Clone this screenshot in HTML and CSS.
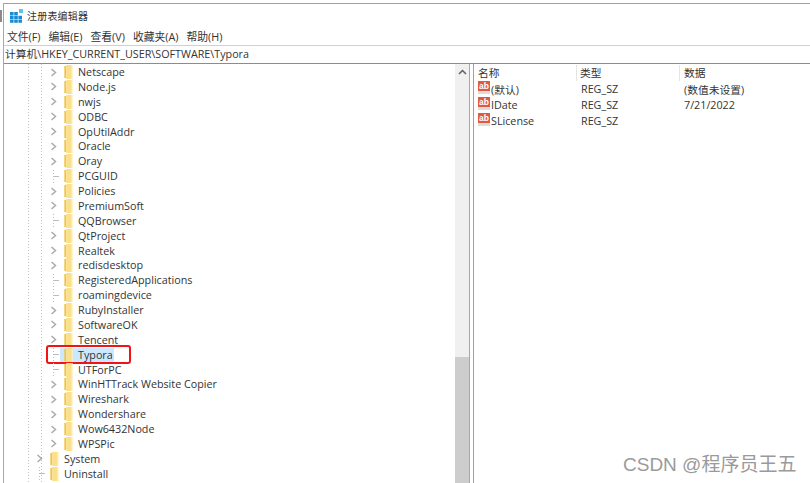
FILE: index.html
```html
<!DOCTYPE html>
<html lang="en">
<head>
    <meta charset="UTF-8">
    <title>注册表编辑器</title>
    <link rel="stylesheet" href="styles.css">
</head>
<body>
    <svg class="defs" width="0" height="0">
        <symbol id="chev" viewBox="0 0 7 9"><path d="M1.5 1 L5.5 4.5 L1.5 8" fill="none" stroke="#ababab" stroke-width="1.5"/></symbol>
        <symbol id="folder" viewBox="0 0 11 15"><path d="M1 1h2v13H1z" fill="#f0c44e"/><path d="M3 0h6v15H3z" fill="#fbe08c"/><path d="M9 0h1v15H9z" fill="#fff0c0"/></symbol>
    </svg>
    <div class="remnant"></div>
    <div class="window">
        <div class="titlebar">
            <svg class="app-icon" width="14" height="15" viewBox="0 0 14 15">
                <path d="M0 4h3.6v3.2H0zM4.2 4h3.6v3.2H4.2zM0 7.8h3.6V11H0zM4.2 7.8h3.6V11H4.2zM8.4 7.8H12V11H8.4zM0 11.6h3.6v3.2H0zM4.2 11.6h3.6v3.2H4.2zM8.4 11.6H12v3.2H8.4z" fill="#1a8ad4"/>
                <path d="M9 1h4v4H9z" fill="#5cc4ea"/>
            </svg>
            <span>注册表编辑器</span>
        </div>
        <div class="menubar">
            <span>文件(F)</span>
            <span>编辑(E)</span>
            <span>查看(V)</span>
            <span>收藏夹(A)</span>
            <span>帮助(H)</span>
        </div>
        <div class="address">计算机\HKEY_CURRENT_USER\SOFTWARE\Typora</div>
        <div class="panes">
            <div class="tree">
                <div class="row"><svg class="chev"><use href="#chev"/></svg><svg class="folder"><use href="#folder"/></svg><span class="label">Netscape</span></div>
                <div class="row"><svg class="chev"><use href="#chev"/></svg><svg class="folder"><use href="#folder"/></svg><span class="label">Node.js</span></div>
                <div class="row"><svg class="chev"><use href="#chev"/></svg><svg class="folder"><use href="#folder"/></svg><span class="label">nwjs</span></div>
                <div class="row"><svg class="chev"><use href="#chev"/></svg><svg class="folder"><use href="#folder"/></svg><span class="label">ODBC</span></div>
                <div class="row"><svg class="chev"><use href="#chev"/></svg><svg class="folder"><use href="#folder"/></svg><span class="label">OpUtilAddr</span></div>
                <div class="row"><svg class="chev"><use href="#chev"/></svg><svg class="folder"><use href="#folder"/></svg><span class="label">Oracle</span></div>
                <div class="row"><svg class="chev"><use href="#chev"/></svg><svg class="folder"><use href="#folder"/></svg><span class="label">Oray</span></div>
                <div class="row leaf"><i class="dash"></i><svg class="folder"><use href="#folder"/></svg><span class="label">PCGUID</span></div>
                <div class="row"><svg class="chev"><use href="#chev"/></svg><svg class="folder"><use href="#folder"/></svg><span class="label">Policies</span></div>
                <div class="row"><svg class="chev"><use href="#chev"/></svg><svg class="folder"><use href="#folder"/></svg><span class="label">PremiumSoft</span></div>
                <div class="row leaf"><i class="dash"></i><svg class="folder"><use href="#folder"/></svg><span class="label">QQBrowser</span></div>
                <div class="row"><svg class="chev"><use href="#chev"/></svg><svg class="folder"><use href="#folder"/></svg><span class="label">QtProject</span></div>
                <div class="row"><svg class="chev"><use href="#chev"/></svg><svg class="folder"><use href="#folder"/></svg><span class="label">Realtek</span></div>
                <div class="row"><svg class="chev"><use href="#chev"/></svg><svg class="folder"><use href="#folder"/></svg><span class="label">redisdesktop</span></div>
                <div class="row leaf"><i class="dash"></i><svg class="folder"><use href="#folder"/></svg><span class="label">RegisteredApplications</span></div>
                <div class="row leaf"><i class="dash"></i><svg class="folder"><use href="#folder"/></svg><span class="label">roamingdevice</span></div>
                <div class="row"><svg class="chev"><use href="#chev"/></svg><svg class="folder"><use href="#folder"/></svg><span class="label">RubyInstaller</span></div>
                <div class="row"><svg class="chev"><use href="#chev"/></svg><svg class="folder"><use href="#folder"/></svg><span class="label">SoftwareOK</span></div>
                <div class="row"><svg class="chev"><use href="#chev"/></svg><svg class="folder"><use href="#folder"/></svg><span class="label">Tencent</span></div>
                <div class="row leaf selected"><i class="dash"></i><svg class="folder"><use href="#folder"/></svg><span class="label">Typora</span><i class="mark"></i></div>
                <div class="row leaf"><i class="dash"></i><svg class="folder"><use href="#folder"/></svg><span class="label">UTForPC</span></div>
                <div class="row"><svg class="chev"><use href="#chev"/></svg><svg class="folder"><use href="#folder"/></svg><span class="label">WinHTTrack Website Copier</span></div>
                <div class="row"><svg class="chev"><use href="#chev"/></svg><svg class="folder"><use href="#folder"/></svg><span class="label">Wireshark</span></div>
                <div class="row"><svg class="chev"><use href="#chev"/></svg><svg class="folder"><use href="#folder"/></svg><span class="label">Wondershare</span></div>
                <div class="row"><svg class="chev"><use href="#chev"/></svg><svg class="folder"><use href="#folder"/></svg><span class="label">Wow6432Node</span></div>
                <div class="row"><svg class="chev"><use href="#chev"/></svg><svg class="folder"><use href="#folder"/></svg><span class="label">WPSPic</span></div>
                <div class="row top"><svg class="chev"><use href="#chev"/></svg><svg class="folder"><use href="#folder"/></svg><span class="label">System</span></div>
                <div class="row top leaf"><i class="dash"></i><svg class="folder"><use href="#folder"/></svg><span class="label">Uninstall</span></div>
            </div>
            <div class="scrollbar">
                <svg class="up" width="9" height="6" viewBox="0 0 9 6"><path d="M1 5 L4.5 1.5 L8 5" fill="none" stroke="#606060" stroke-width="1.5"/></svg>
                <div class="thumb"></div>
            </div>
            <div class="values">
                <div class="vrow vhead"><span class="c1">名称</span><span class="c2">类型</span><span class="c3">数据</span></div>
                <div class="vrow"><span class="c1"><span class="ab">ab</span>(默认)</span><span class="c2 reg">REG_SZ</span><span class="c3">(数值未设置)</span></div>
                <div class="vrow"><span class="c1"><span class="ab">ab</span>IDate</span><span class="c2 reg">REG_SZ</span><span class="c3">7/21/2022</span></div>
                <div class="vrow"><span class="c1"><span class="ab">ab</span>SLicense</span><span class="c2 reg">REG_SZ</span><span class="c3"></span></div>
            </div>
        </div>
    </div>
    <div class="watermark">CSDN @程序员王五</div>
</body>
</html>
```

FILE: styles.css
```css
html, body {
    margin: 0;
    padding: 0;
    height: 100%;
    overflow: hidden;
    background: #fff;
}
body {
    font-family: "Open Sans", "Noto Sans CJK SC", sans-serif;
    font-size: 10.75px;
    color: #333;
}
.defs {
    position: absolute;
}
.remnant {
    position: absolute;
    left: 0;
    top: 10px;
    width: 2px;
    height: 12px;
    background: #8a8a8a;
}
.window {
    height: 480px;
    margin: 3px 0 0 3px;
    border-top: 1px solid #a0a0a0;
    border-left: 1px solid #a8a8a8;
    display: flex;
    flex-direction: column;
    overflow: hidden;
}
.titlebar {
    height: 23px;
    display: flex;
    align-items: center;
    gap: 3px;
    padding-left: 6px;
    font-family: "Noto Sans CJK SC", sans-serif;
    font-size: 10px;
    letter-spacing: 0.2px;
}
.menubar {
    height: 18px;
    display: flex;
    align-items: center;
    gap: 8px;
    padding-left: 3px;
    font-size: 10.8px;
}
.address {
    height: 17px;
    line-height: 17px;
    padding-left: 1px;
    border-top: 1px solid #d0d0d0;
    border-bottom: 1px solid #8c8c8c;
    white-space: nowrap;
}
.panes {
    flex: 1;
    display: flex;
    min-height: 0;
}
.tree {
    position: relative;
    width: 451px;
    padding-top: 0.6px;
    background:
        repeating-linear-gradient(to bottom, #c4c4c4 0 1px, transparent 1px 3px) 24px 0 / 1px 100% no-repeat,
        repeating-linear-gradient(to bottom, #c4c4c4 0 1px, transparent 1px 3px) 37px 0 / 1px 100% no-repeat;
}
.row {
    height: 14.89px;
    display: flex;
    align-items: center;
    position: relative;
    padding-left: 47px;
    white-space: nowrap;
}
.row.top {
    padding-left: 33px;
}
.chev {
    width: 7px;
    height: 9px;
    margin-right: 6px;
    margin-left: -1px;
    flex: none;
}
.folder {
    width: 11px;
    height: 14px;
    margin-right: 3px;
    flex: none;
}
.dash {
    width: 6px;
    height: 1px;
    margin: 0 4px 0 2px;
    flex: none;
    position: relative;
    background: #bdbdbd;
}
.dash::before {
    content: "";
    position: absolute;
    left: 0;
    top: -6px;
    width: 1px;
    height: 13px;
    background: repeating-linear-gradient(to bottom, #bdbdbd 0 1px, transparent 1px 3px);
}
.label {
    padding: 0 1px;
    line-height: 14px;
}
.selected .label {
    background: #cce8ff;
}
.selected .folder {
    background: #cce8ff;
    padding: 0 3px;
    margin: 0 0 0 -3px;
}
.mark {
    position: absolute;
    left: 42px;
    top: -2px;
    width: 81px;
    height: 15px;
    border: 2px solid #f01414;
    border-radius: 3px;
}
.scrollbar {
    width: 14px;
    background: #f0f0f0;
    border-right: 1px solid #a8a8a8;
    position: relative;
    flex: none;
}
.up {
    display: block;
    margin: 5px auto 0;
}
.thumb {
    position: absolute;
    left: 0;
    right: 0;
    top: 293px;
    bottom: 0;
    background: #cdcdcd;
}
.values {
    flex: 1;
    margin-left: 3px;
    border-left: 1px solid #a0a0a0;
    padding-top: 1px;
}
.vrow {
    height: 16px;
    display: flex;
    align-items: center;
    white-space: nowrap;
}
.vhead span {
    border-right: 1px solid #e5e5e5;
    height: 16px;
    line-height: 16px;
}
.c1 {
    width: 103px;
    padding-left: 4px;
    box-sizing: border-box;
    display: flex;
    align-items: center;
}
.c2 {
    width: 103px;
    padding-left: 3px;
    box-sizing: border-box;
}
.c2.reg {
    padding-left: 4px;
}
.c3 {
    padding-left: 4px;
}
.vhead .c3 {
    border-right: 0;
}
.ab {
    width: 12px;
    height: 10px;
    margin: -3px 1px 0 0;
    flex: none;
    background: #e25a3e;
    border-bottom: 3px solid #dcdcdc;
    color: #fff;
    font-family: "Liberation Sans", sans-serif;
    font-size: 8.5px;
    font-weight: 700;
    line-height: 10px;
    text-align: center;
}
.watermark {
    position: absolute;
    left: 623px;
    top: 449px;
    font-family: "Liberation Sans", "Noto Sans CJK SC", sans-serif;
    font-size: 19px;
    color: #9a9a9a;
    white-space: nowrap;
}
```
